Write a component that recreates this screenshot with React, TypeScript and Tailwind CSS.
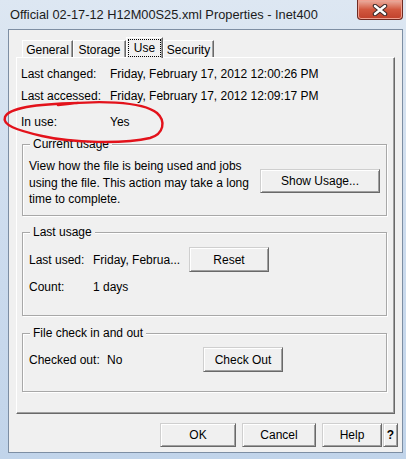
import React from 'react';

const btn =
  'flex items-center justify-center bg-[#f0f0f0] border border-t-[#cfcfcf] border-l-[#cfcfcf] border-r-[#696969] border-b-[#696969] shadow-[inset_1px_1px_0_#ffffff,inset_-1px_-1px_0_#a0a0a0] text-[12px] text-black';

function Group({ title, className, children }: { title: string; className: string; children: React.ReactNode }) {
  return (
    <div className={`relative ml-[5px] w-[365px] border border-[#a8a8a8] shadow-[1px_1px_0_#ffffff,inset_1px_1px_0_#ffffff] ${className}`}>
      <span className="absolute -top-[8px] left-[7px] bg-[#f0f0f0] px-[3px] leading-[14px]">{title}</span>
      {children}
    </div>
  );
}

function Tab({ label, w }: { label: string; w: string }) {
  return (
    <div
      className={`${w} h-[17px] mb-px flex items-center justify-center pt-[2px] border-l border-t border-r border-l-white border-t-white border-r-[#696969] shadow-[inset_-1px_0_0_#a0a0a0]`}
    >
      {label}
    </div>
  );
}

export default function App() {
  return (
    <div className="relative w-[406px] h-[459px] overflow-hidden bg-gradient-to-b from-[#dde7f2] via-[#cddcee] to-[#c1d4ea] font-['Liberation_Sans',Arial,sans-serif] text-[12px] text-black">
      {/* title bar */}
      <div className="flex h-[29px] items-start justify-between">
        <div className="pl-[10px] pt-[7px] leading-[16px] text-[12.8px] text-[#1b1b1b]">
          Official 02-17-12 H12M00S25.xml Properties - Inet400
        </div>
        <div className="mr-[3px] flex h-[20px] w-[46px] items-center justify-center rounded-b-[4px] border border-t-0 border-[#6e2a22] bg-gradient-to-b from-[#eab0a3] via-[#d2583f] to-[#c0402b] shadow-[inset_0_0_0_1px_#f0a090]">
          <svg width="16" height="12" viewBox="0 0 16 12">
            <path d="M3 2 L13 10 M13 2 L3 10" stroke="#3c2a2a" strokeWidth="4.5" strokeLinecap="round" />
            <path d="M3 2 L13 10 M13 2 L3 10" stroke="#ffffff" strokeWidth="2.4" strokeLinecap="round" />
          </svg>
        </div>
      </div>

      {/* client area */}
      <div className="ml-[8px] h-[424px] w-[395px] border border-[#7d8ea3] bg-[#f0f0f0] pt-[7px]">
        <div className="ml-[7px] flex flex-col">
          {/* tabs */}
          <div className="relative z-10 -mb-px flex h-[21px] items-end pl-[6px]">
            <Tab label="General" w="w-[51px]" />
            <Tab label="Storage" w="w-[53px]" />
            <div className="flex h-[21px] w-[37px] bg-[#f0f0f0] border-l border-t border-r border-l-white border-t-white border-r-[#696969] shadow-[inset_-1px_0_0_#a0a0a0] p-[1px]">
              <div className="flex flex-1 items-center justify-center border border-dotted border-black pb-[1px]">Use</div>
            </div>
            <Tab label="Security" w="w-[51px]" />
          </div>

          {/* panel */}
          <div className="h-[357px] w-[379px] border border-t-white border-l-white border-r-[#696969] border-b-[#696969] shadow-[inset_-1px_-1px_0_#a0a0a0]">
            <div className="mt-[5px] flex h-[22px] items-center pl-[4px]">
              <span className="w-[89px]">Last changed:</span>
              <span>Friday, February 17, 2012 12:00:26 PM</span>
            </div>
            <div className="flex h-[22px] items-center pl-[4px]">
              <span className="w-[89px]">Last accessed:</span>
              <span>Friday, February 17, 2012 12:09:17 PM</span>
            </div>
            <div className="mt-[4px] flex h-[22px] items-center pl-[4px]">
              <span className="w-[89px]">In use:</span>
              <span>Yes</span>
            </div>

            <Group title="Current usage" className="mt-[11px] h-[72px]">
              <div className="flex items-start pl-[6px] pt-[13px]">
                <div className="w-[231px] leading-[16.5px]">
                  <div>View how the file is being used and jobs</div>
                  <div>using the file. This action may take a long</div>
                  <div>time to complete.</div>
                </div>
                <button className={`${btn} mt-[11px] h-[24px] w-[120px]`}>Show Usage...</button>
              </div>
            </Group>

            <Group title="Last usage" className="mt-[16px] h-[84px]">
              <div className="pl-[6px] pt-[14px]">
                <div className="flex h-[25px] items-center">
                  <span className="w-[64px]">Last used:</span>
                  <span className="w-[96px]">Friday, Februa...</span>
                  <button className={`${btn} h-[25px] w-[80px]`}>Reset</button>
                </div>
                <div className="mt-[4px] flex h-[22px] items-center">
                  <span className="w-[64px]">Count:</span>
                  <span>1 days</span>
                </div>
              </div>
            </Group>

            <Group title="File check in and out" className="mt-[17px] h-[59px]">
              <div className="flex h-[25px] items-center pl-[6px] mt-[13px]">
                <span className="w-[78px]">Checked out:</span>
                <span className="w-[96px]">No</span>
                <button className={`${btn} h-[25px] w-[80px]`}>Check Out</button>
              </div>
            </Group>
          </div>
        </div>

        {/* dialog buttons */}
        <div className="mr-[4px] mt-[9px] flex h-[24px] justify-end">
          <button className={`${btn} h-[24px] w-[76px]`}>OK</button>
          <button className={`${btn} ml-[6px] h-[24px] w-[74px]`}>Cancel</button>
          <button className={`${btn} ml-[6px] h-[24px] w-[60px]`}>Help</button>
          <button className={`${btn} ml-px h-[24px] w-[15px] font-bold`}>?</button>
        </div>
      </div>

      {/* red hand-drawn annotation */}
      <svg className="pointer-events-none absolute left-0 top-0" width="406" height="459" viewBox="0 0 406 459">
        <path
          d="M58 105 C95 100 142 101 157 113 C166 121 164 134 150 138 C124 144 72 143 42 136 C16 130 2 125 5 117 C9 108 34 104 78 103"
          fill="none"
          stroke="#e3121b"
          strokeWidth="2.4"
          strokeLinecap="round"
        />
      </svg>
    </div>
  );
}
